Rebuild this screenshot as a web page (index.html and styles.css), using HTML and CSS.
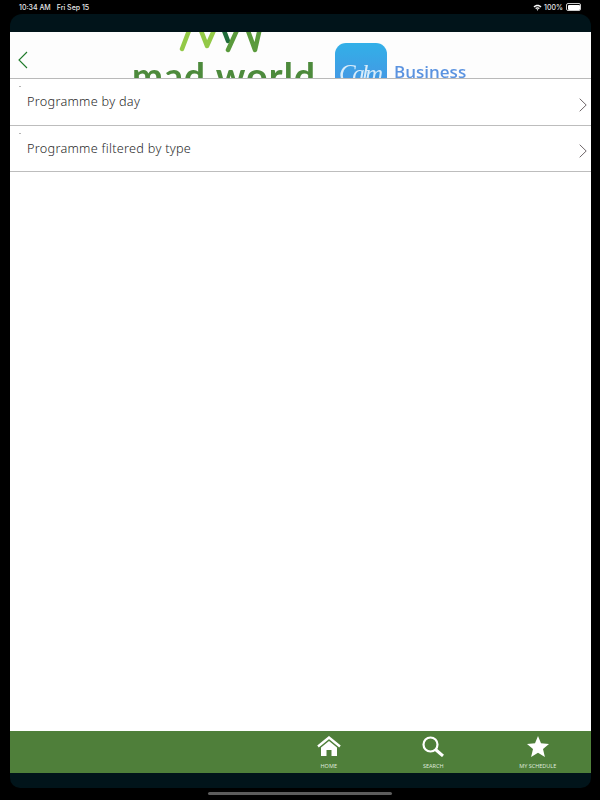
FILE: index.html
```html
<!DOCTYPE html>
<html>
<head>
  <link rel="stylesheet" href="styles.css">
</head>
<body>
<div class="status-bar">
  <div class="status-left">
    <span>10:34 AM</span>
    <span>Fri Sep 15</span>
  </div>
  <div class="status-right">
    <svg class="wifi" width="9" height="7" viewBox="0 0 18 14">
      <path d="M1 5 C5.5 0.5 12.5 0.5 17 5 L15 7 C11.5 3.8 6.5 3.8 3 7 Z" fill="#fff"/>
      <path d="M4.3 8.2 C7 5.7 11 5.7 13.7 8.2 L11.9 10 C10.2 8.5 7.8 8.5 6.1 10 Z" fill="#fff"/>
      <path d="M7.2 11.1 C8.2 10.3 9.8 10.3 10.8 11.1 L9 13.4 Z" fill="#fff"/>
    </svg>
    <span>100%</span>
    <div class="battery"><div class="battery-fill"></div></div>
  </div>
</div>

<div class="screen">
  <div class="screen-top"></div>
  <div class="page">
    <div class="header">
      <svg class="back" width="10" height="18" viewBox="0 0 10 18">
        <path d="M9 1 L1 9 L9 17" fill="none" stroke="#1f7a2a" stroke-width="1.1"/>
      </svg>
      <svg class="logo" width="360" height="46" viewBox="0 0 360 46">
        <defs>
          <linearGradient id="calm-bg" x1="0" y1="0" x2="0" y2="1">
            <stop offset="0" stop-color="#32b0e8"/>
            <stop offset="1" stop-color="#4a8fe2"/>
          </linearGradient>
        </defs>
        <g fill="none" stroke-width="4.5" stroke-linecap="round" stroke-linejoin="round">
          <path d="M70 -4 L62 17" stroke="#93c947"/>
          <path d="M80 -4 L87 14 L95 -4" stroke="#93c947"/>
          <path d="M103 -4 L108 9" stroke="#1f6b3a"/>
          <path d="M108 18 L118 -4" stroke="#5a9a3c"/>
          <path d="M127 -4 L135 18 L140 -4" stroke="#5a9a3c"/>
        </g>
        <text class="logo-word" x="12" y="57" textLength="183">mad world</text>
        <rect x="215" y="11" width="52" height="52" rx="11" fill="url(#calm-bg)"/>
        <text class="logo-calm" x="219" y="50" textLength="44">Calm</text>
        <text class="logo-business" x="274" y="46">Business</text>
      </svg>
    </div>

    <div class="row">
      <div class="row-main">
        <span class="row-dot"></span>
        <span class="row-label">Programme by day</span>
      </div>
      <svg class="chevron" width="8" height="14" viewBox="0 0 8 14">
        <path d="M0.7 0.7 L7.2 7 L0.7 13.3" fill="none" stroke="#4a4044" stroke-width="0.8"/>
      </svg>
    </div>
    <div class="row">
      <div class="row-main">
        <span class="row-dot"></span>
        <span class="row-label">Programme filtered by type</span>
      </div>
      <svg class="chevron" width="8" height="14" viewBox="0 0 8 14">
        <path d="M0.7 0.7 L7.2 7 L0.7 13.3" fill="none" stroke="#4a4044" stroke-width="0.8"/>
      </svg>
    </div>
  </div>

  <div class="tab-bar">
    <div class="tab">
      <svg width="24" height="21" viewBox="0 0 24 21">
        <path d="M1 10.5 L12 1.5 L23 10.5" fill="none" stroke="#fff" stroke-width="2.4"/>
        <path d="M4 11.5 L12 5 L20 11.5 V20 H14.5 V14 H9.5 V20 H4 Z" fill="#fff"/>
      </svg>
      <span>HOME</span>
    </div>
    <div class="tab">
      <svg width="24" height="21" viewBox="0 0 24 21">
        <circle cx="9.5" cy="8.5" r="7" fill="none" stroke="#fff" stroke-width="2.2"/>
        <path d="M14.5 13.5 L22 20" fill="none" stroke="#fff" stroke-width="3"/>
      </svg>
      <span>SEARCH</span>
    </div>
    <div class="tab">
      <svg width="24" height="21" viewBox="0 0 24 21">
        <path d="M12 0 L15 7.3 L23 8 L17 13.1 L18.9 21 L12 16.8 L5.1 21 L7 13.1 L1 8 L9 7.3 Z" fill="#fff"/>
      </svg>
      <span>MY SCHEDULE</span>
    </div>
  </div>
  <div class="screen-bottom"></div>
</div>

<div class="home-area">
  <div class="home-indicator"></div>
</div>
</body>
</html>
```

FILE: styles.css
```css
body {
  background-color: #000000;
  margin: 0;
  display: flex;
  flex-direction: column;
  height: 800px;
  overflow: hidden;
  font-family: "Liberation Sans", Arial, sans-serif;
}

.status-bar {
  height: 14px;
  flex: none;
  display: flex;
  justify-content: space-between;
  align-items: center;
  padding: 0 19px;
  color: #e8e8e8;
  font-family: Inter, sans-serif;
  font-size: 7px;
  font-weight: 500;
}

.status-left {
  display: flex;
  gap: 6px;
}

.status-right {
  display: flex;
  align-items: center;
  gap: 2px;
}

.battery {
  width: 12px;
  height: 5px;
  border: 0.5px solid #cccccc;
  border-radius: 2px;
  margin-left: 1px;
  padding: 0.5px;
}

.battery-fill {
  height: 100%;
  background-color: #ffffff;
  border-radius: 1px;
}

.screen {
  flex: 1;
  display: flex;
  flex-direction: column;
  margin: 0 9px 0 10px;
}

.screen-top {
  height: 18px;
  flex: none;
  background-color: #01141a;
  border-radius: 12px 12px 0 0;
}

.page {
  flex: 1;
  background-color: #ffffff;
}

.header {
  height: 46px;
  display: flex;
  align-items: center;
  padding-left: 8px;
  border-bottom: 1px solid #b9b9b9;
  background-color: #fdfdfd;
  overflow: hidden;
}

.back {
  flex: none;
  margin-top: 9px;
}

.logo {
  flex: none;
  margin-left: 92px;
  filter: blur(0.5px);
}

.logo-word {
  font-family: Lato, sans-serif;
  font-size: 37px;
  font-weight: bold;
  fill: #4d8a3c;
}

.logo-calm {
  font-family: "Liberation Serif", serif;
  font-style: italic;
  font-size: 25px;
  fill: #d8ecfa;
}

.logo-business {
  font-family: "Open Sans", sans-serif;
  font-size: 17px;
  font-weight: 600;
  fill: #5b93e0;
}

.row {
  height: 45.5px;
  display: flex;
  justify-content: space-between;
  align-items: center;
  padding: 0 4px 0 9px;
  border-bottom: 1px solid #bdbdbd;
}

.row-main {
  display: flex;
  flex-direction: column;
  align-self: flex-start;
}

.row-dot {
  display: block;
  width: 2px;
  height: 1px;
  margin-top: 7px;
  background-color: #b5b5b5;
}

.row-label {
  margin: 5px 0 0 8px;
  font-family: "Noto Sans", sans-serif;
  font-size: 12.7px;
  font-weight: 300;
  line-height: 18px;
  letter-spacing: 0.27px;
  color: #2a2a2a;
}

.chevron {
  margin-top: 6px;
}

.tab-bar {
  height: 42px;
  flex: none;
  display: flex;
  justify-content: flex-end;
  padding-right: 1px;
  background-color: #4f7f3a;
}

.tab {
  width: 104.5px;
  display: flex;
  flex-direction: column;
  align-items: center;
  padding-top: 5px;
  box-sizing: border-box;
  color: #dfe8da;
  font-size: 5.5px;
}

.tab span {
  margin-top: 5px;
  font-family: "Noto Sans", sans-serif;
}

.screen-bottom {
  height: 15px;
  flex: none;
  background-color: #01141a;
  border-radius: 0 0 10px 10px;
}

.home-area {
  height: 12px;
  flex: none;
  display: flex;
  justify-content: center;
  padding-top: 4px;
  box-sizing: border-box;
}

.home-indicator {
  width: 184px;
  height: 3px;
  background-color: #5c5c5c;
  border-radius: 2px;
}
```
